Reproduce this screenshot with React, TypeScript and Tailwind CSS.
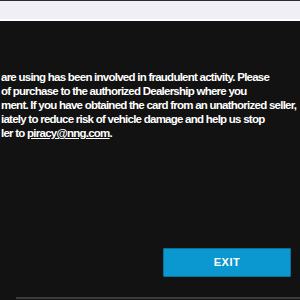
const lines = [
  "are using has been involved in fraudulent activity. Please",
  "of purchase to the authorized Dealership where you",
  "ment. If you have obtained the card from an unathorized seller,",
  "iately to reduce risk of vehicle damage and help us stop",
]

export default function App() {
  return (
    <div className="w-[300px] h-[300px] overflow-hidden bg-[#121212] flex flex-col font-['Liberation_Sans',Arial,sans-serif]">
      {/* browser chrome strip */}
      <div className="h-px bg-[#2b2b30]" />
      <div className="h-[18px] bg-[#efeff5]" />
      <div className="h-[2px] bg-white" />

      {/* warning body */}
      <div className="flex-1 flex flex-col">
        <div className="pt-[49px] pl-px text-white text-[11.5px] leading-[14px] font-bold tracking-[-0.75px]">
          {lines.map((l) => (
            <p key={l} className="whitespace-nowrap">
              {l}
            </p>
          ))}
          <p className="whitespace-nowrap">
            ler to <span className="underline">piracy@nng.com</span>.
          </p>
        </div>

        <div className="mt-auto flex justify-end pr-[9px] pb-[20px]">
          <button className="w-[128px] h-[29px] bg-[#0b97cf] border border-[#0a6f99] rounded-[1px] text-white text-[11px] font-bold tracking-[0.5px]">
            EXIT
          </button>
        </div>
      </div>

      <div className="h-[2px] ml-[16px] mb-px bg-[#3c3c3c]" />
    </div>
  )
}
